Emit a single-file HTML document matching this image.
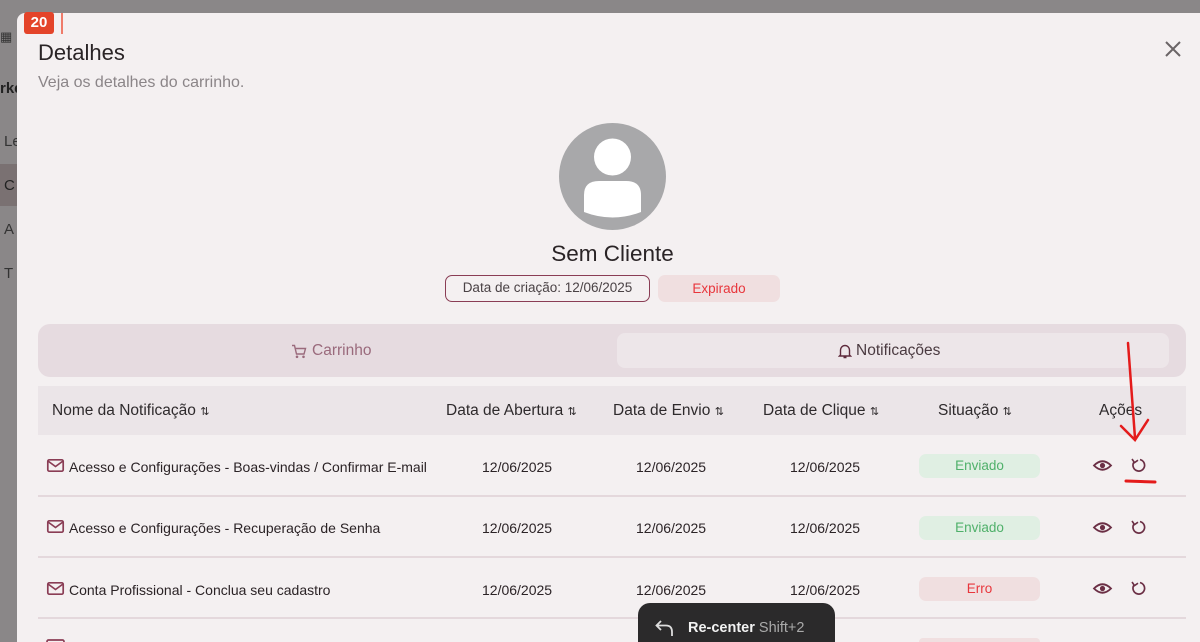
<!DOCTYPE html>
<html><head><meta charset="utf-8"><style>
*{margin:0;padding:0;box-sizing:border-box}
html,body{width:1200px;height:642px;overflow:hidden}
body{background:#8a8788;font-family:"Liberation Sans",sans-serif;position:relative;color:#2b2326}
.abs{position:absolute}
.modal{position:absolute;left:17px;top:13px;width:1200px;height:629px;background:#f4f0f1;border-radius:8px 0 0 0}
.t{position:absolute;white-space:nowrap}
.hd{font-size:15.5px;color:#2e2a2c}
.cell{font-size:14px;color:#2b2326}
.pill{position:absolute;width:121px;height:24px;border-radius:7px;font-size:13.5px;text-align:center;line-height:24px}
.line{position:absolute;left:38px;width:1148px;height:2px;background:#e4d8dc}
</style></head><body>
<div class="t" style="left:0;top:29px;font-size:13px;color:#333">▦</div>
<div class="t" style="left:0;top:80px;font-size:15px;color:#222;font-weight:bold">rke</div>
<div class="abs" style="left:0;top:164px;width:17px;height:42px;background:#7a7172"></div>
<div class="t" style="left:4px;top:133px;font-size:15px;color:#333">Le</div>
<div class="t" style="left:4px;top:177px;font-size:15px;color:#222">C</div>
<div class="t" style="left:4px;top:221px;font-size:15px;color:#333">A</div>
<div class="t" style="left:4px;top:265px;font-size:15px;color:#333">T</div>
<div class="modal"></div>
<div class="abs" style="left:24px;top:12px;width:30px;height:22px;background:#e4442a;border-radius:3px;color:#fff;font-size:15px;font-weight:bold;text-align:center;line-height:22px">20</div>
<div class="abs" style="left:61px;top:13px;width:2px;height:21px;background:#ef7b6a"></div>
<div class="t" style="left:38px;top:40px;font-size:22px;color:#2a2426">Detalhes</div>
<div class="t" style="left:38px;top:74px;font-size:16px;color:#8b8588">Veja os detalhes do carrinho.</div>
<svg class="abs" style="left:1164px;top:40px" width="18" height="18" viewBox="0 0 18 18"><path d="M2 2L16 16M16 2L2 16" stroke="#6b6567" stroke-width="2"/></svg>
<svg class="abs" style="left:559px;top:123px" width="107" height="107" viewBox="0 0 107 107"><circle cx="53.5" cy="53.5" r="53.5" fill="#a8a8aa"/><circle cx="53.5" cy="34" r="18.5" fill="#fff"/><path d="M25 89V72Q25 58 40 58H67Q82 58 82 72V89Q53.5 100 25 89Z" fill="#fff"/></svg>
<div class="t" style="left:0;width:1225px;text-align:center;top:241px;font-size:22.5px;color:#2a2426">Sem Cliente</div>
<div class="abs" style="left:445px;top:275px;width:205px;height:27px;border:1.5px solid #8a3d55;border-radius:7px;font-size:13.5px;color:#4a4245;text-align:center;line-height:24px">Data de criação: 12/06/2025</div>
<div class="abs" style="left:658px;top:275px;width:122px;height:27px;background:#f0dfe0;border-radius:7px;font-size:13.5px;color:#e8363c;text-align:center;line-height:27px">Expirado</div>
<div class="abs" style="left:38px;top:324px;width:1148px;height:53px;background:#e6dbe0;border-radius:12px"></div>
<div class="abs" style="left:617px;top:333px;width:552px;height:35px;background:#ede6e9;border-radius:8px"></div>
<svg class="abs" style="left:291px;top:344px" width="16" height="15" viewBox="0 0 16 15"><path d="M1 1.5H3.5L5.5 10H13L14.5 4.5H4.5" fill="none" stroke="#9a6a7c" stroke-width="1.4"/><circle cx="6" cy="12.8" r="1.3" fill="#9a6a7c"/><circle cx="12.5" cy="12.8" r="1.3" fill="#9a6a7c"/></svg>
<div class="t" style="left:312px;top:342px;font-size:15.5px;color:#9a6a7c">Carrinho</div>
<svg class="abs" style="left:838px;top:343px" width="14" height="16" viewBox="0 0 14 16"><path d="M2.5 12V7A4.5 4.5 0 0 1 11.5 7V12L12.5 13H1.5Z M5.5 14.5H8.5" fill="none" stroke="#5e2a3c" stroke-width="1.4"/></svg>
<div class="t" style="left:856px;top:342px;font-size:15.5px;color:#4a3a40">Notificações</div>
<div class="abs" style="left:38px;top:386px;width:1148px;height:49px;background:#ebe5e8"></div>
<div class="t hd" style="left:52px;top:402px">Nome da Notificação <span style="font-size:11px">⇅</span></div>
<div class="t hd" style="left:446px;top:402px">Data de Abertura <span style="font-size:11px">⇅</span></div>
<div class="t hd" style="left:613px;top:402px">Data de Envio <span style="font-size:11px">⇅</span></div>
<div class="t hd" style="left:763px;top:402px">Data de Clique <span style="font-size:11px">⇅</span></div>
<div class="t hd" style="left:938px;top:402px">Situação <span style="font-size:11px">⇅</span></div>
<div class="t hd" style="left:1099px;top:402px">Ações</div>
<div class="line" style="top:495px"></div>
<div class="line" style="top:556px"></div>
<div class="line" style="top:617px"></div>
<svg class="abs" style="left:0;top:0" width="1200" height="642">
<defs><g id="mail"><rect x="0.8" y="0.8" width="15.4" height="11.4" rx="1.5" fill="none" stroke="#8a3d55" stroke-width="1.7"/><path d="M1 2L8.5 7.5L16 2" fill="none" stroke="#8a3d55" stroke-width="1.7"/></g>
<g id="eye"><path d="M0 5.5Q8.5 -3 17 5.5Q8.5 14 0 5.5Z" fill="none" stroke="#6b2f45" stroke-width="1.8"/><circle cx="8.5" cy="5.5" r="2.6" fill="#6b2f45"/></g>
<g id="ref"><path d="M3 4A5.8 5.8 0 1 0 9 1.6" fill="none" stroke="#6b2f45" stroke-width="1.7"/><path d="M1 1L3.5 4.6L7 2.2" fill="none" stroke="#6b2f45" stroke-width="1.6"/></g></defs>
<use href="#mail" x="47" y="459"/><use href="#mail" x="47" y="520"/><use href="#mail" x="47" y="582"/>
<use href="#eye" x="1094" y="460"/><use href="#eye" x="1094" y="522"/><use href="#eye" x="1094" y="583"/>
<use href="#ref" x="1131" y="458"/><use href="#ref" x="1131" y="520"/><use href="#ref" x="1131" y="581"/>
<rect x="47" y="640" width="17" height="12" rx="1.5" fill="none" stroke="#8a3d55" stroke-width="1.7"/>
<path d="M1128 343L1135 438M1121 426L1135 440L1148 420" fill="none" stroke="#e41b1b" stroke-width="2.5" stroke-linecap="round"/>
<path d="M1126 481L1155 482" stroke="#e41b1b" stroke-width="3" stroke-linecap="round"/>
</svg>
<div class="t cell" style="left:69px;top:459px">Acesso e Configurações - Boas-vindas / Confirmar E-mail</div>
<div class="t cell" style="left:69px;top:520px">Acesso e Configurações - Recuperação de Senha</div>
<div class="t cell" style="left:69px;top:582px">Conta Profissional - Conclua seu cadastro</div>
<div class="t cell" style="left:482px;top:459px">12/06/2025</div><div class="t cell" style="left:636px;top:459px">12/06/2025</div><div class="t cell" style="left:790px;top:459px">12/06/2025</div>
<div class="t cell" style="left:482px;top:520px">12/06/2025</div><div class="t cell" style="left:636px;top:520px">12/06/2025</div><div class="t cell" style="left:790px;top:520px">12/06/2025</div>
<div class="t cell" style="left:482px;top:582px">12/06/2025</div><div class="t cell" style="left:636px;top:582px">12/06/2025</div><div class="t cell" style="left:790px;top:582px">12/06/2025</div>
<div class="pill" style="left:919px;top:454px;background:#e0efe3;color:#4fb06a">Enviado</div>
<div class="pill" style="left:919px;top:516px;background:#e0efe3;color:#4fb06a">Enviado</div>
<div class="pill" style="left:919px;top:577px;background:#f0dfe0;color:#e8363c">Erro</div>
<div class="abs" style="left:919px;top:638px;width:121px;height:4px;border-radius:7px 7px 0 0;background:#f0dfe0"></div>
<div class="abs" style="left:638px;top:603px;width:197px;height:39px;background:#2b2a2b;border-radius:12px 12px 0 0"></div>
<svg class="abs" style="left:655px;top:619px" width="20" height="18" viewBox="0 0 20 18"><path d="M6 2L1.5 6.5L6 11M1.5 6.5H11Q17 6.5 17 13V17" fill="none" stroke="#ddd" stroke-width="1.8"/></svg>
<div class="t" style="left:688px;top:620px;font-size:14.5px;color:#f2f2f2;font-weight:bold">Re-center <span style="color:#aaa;font-weight:normal">Shift+2</span></div>
</body></html>
